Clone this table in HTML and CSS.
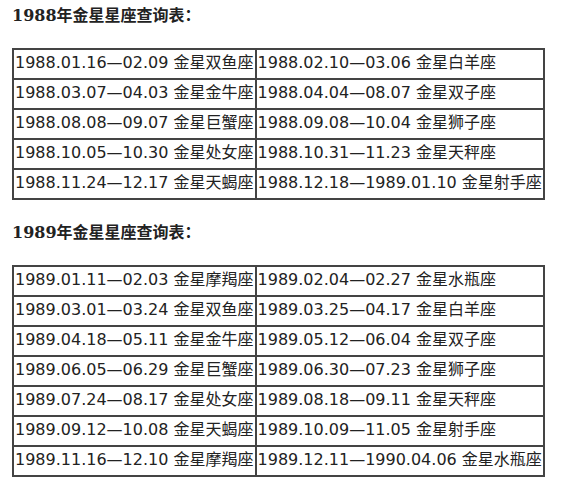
FILE: index.html
```html
<!DOCTYPE html>
<html lang="zh-CN">
<head>
<meta charset="utf-8">
<title>金星星座查询表</title>
<link rel="stylesheet" href="styles.css">
</head>
<body>
<div class="page">
  <h2 class="title">1988年金星星座查询表：</h2>
  <table class="venus">
    <tr><td>1988.01.16—02.09 金星双鱼座</td><td>1988.02.10—03.06 金星白羊座</td></tr>
    <tr><td>1988.03.07—04.03 金星金牛座</td><td>1988.04.04—08.07 金星双子座</td></tr>
    <tr><td>1988.08.08—09.07 金星巨蟹座</td><td>1988.09.08—10.04 金星狮子座</td></tr>
    <tr><td>1988.10.05—10.30 金星处女座</td><td>1988.10.31—11.23 金星天秤座</td></tr>
    <tr><td>1988.11.24—12.17 金星天蝎座</td><td>1988.12.18—1989.01.10 金星射手座</td></tr>
  </table>
  <h2 class="title">1989年金星星座查询表：</h2>
  <table class="venus">
    <tr><td>1989.01.11—02.03 金星摩羯座</td><td>1989.02.04—02.27 金星水瓶座</td></tr>
    <tr><td>1989.03.01—03.24 金星双鱼座</td><td>1989.03.25—04.17 金星白羊座</td></tr>
    <tr><td>1989.04.18—05.11 金星金牛座</td><td>1989.05.12—06.04 金星双子座</td></tr>
    <tr><td>1989.06.05—06.29 金星巨蟹座</td><td>1989.06.30—07.23 金星狮子座</td></tr>
    <tr><td>1989.07.24—08.17 金星处女座</td><td>1989.08.18—09.11 金星天秤座</td></tr>
    <tr><td>1989.09.12—10.08 金星天蝎座</td><td>1989.10.09—11.05 金星射手座</td></tr>
    <tr><td>1989.11.16—12.10 金星摩羯座</td><td>1989.12.11—1990.04.06 金星水瓶座</td></tr>
  </table>
</div>
</body>
</html>
```
FILE: styles.css
```css
html, body {
  margin: 0;
  padding: 0;
  background: #ffffff;
}

.page {
  padding: 0 12px;
}

.title {
  margin: 20px 0 0;
  font-family: "DejaVu Serif", "Noto Sans CJK SC", serif;
  font-weight: bold;
  font-size: 16px;
  line-height: 25px;
  color: #222222;
}

.title:first-child {
  margin-top: 3px;
}

.venus {
  margin-top: 20px;
  border-collapse: collapse;
  font-family: "DejaVu Sans", "Noto Sans CJK SC", sans-serif;
  font-size: 16px;
  color: #222222;
}

.venus td {
  border: 2px solid #444444;
  height: 30px;
  padding: 0 1px 2px;
  box-sizing: border-box;
  white-space: nowrap;
  vertical-align: middle;
  line-height: 20px;
}
```
